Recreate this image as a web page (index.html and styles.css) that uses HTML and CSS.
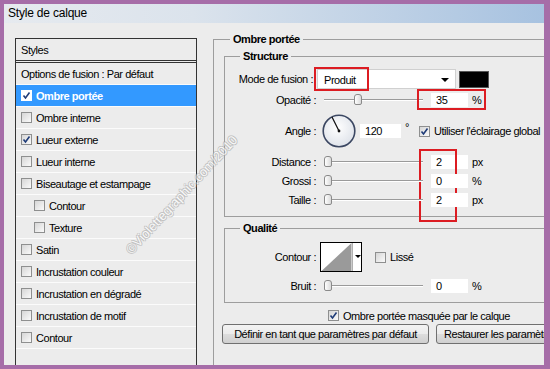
FILE: index.html
```html
<!DOCTYPE html>
<html>
<head>
<meta charset="utf-8">
<title>Style de calque</title>
<link rel="stylesheet" href="styles.css">
</head>
<body>
<div class="win">
  <div class="titlebar">Style de calque</div>
  <div class="main">
    <div class="styles-list">
      <div class="list-head">Styles</div>
      <div class="item">Options de fusion : Par défaut</div>
      <div class="item sel"><span class="cb on"><svg viewBox="0 0 9 9"><polyline points="1.5,4.5 3.5,7 7.5,1.5"/></svg></span>Ombre portée</div>
      <div class="item"><span class="cb"></span>Ombre interne</div>
      <div class="item"><span class="cb on"><svg viewBox="0 0 9 9"><polyline points="1.5,4.5 3.5,7 7.5,1.5"/></svg></span>Lueur externe</div>
      <div class="item"><span class="cb"></span>Lueur interne</div>
      <div class="item"><span class="cb"></span>Biseautage et estampage</div>
      <div class="item sub"><span class="cb"></span>Contour</div>
      <div class="item sub"><span class="cb"></span>Texture</div>
      <div class="item"><span class="cb"></span>Satin</div>
      <div class="item"><span class="cb"></span>Incrustation couleur</div>
      <div class="item"><span class="cb"></span>Incrustation en dégradé</div>
      <div class="item"><span class="cb"></span>Incrustation de motif</div>
      <div class="item"><span class="cb"></span>Contour</div>
    </div>

    <div class="options">
      <fieldset class="grp grp-main">
        <legend>Ombre portée</legend>

        <fieldset class="grp grp-sub">
          <legend>Structure</legend>
          <div class="row row-mode">
            <span class="lbl">Mode de fusion :</span>
            <div class="select">Produit<span class="arrow"></span><span class="mark mark-mode"></span></div>
            <span class="swatch"></span>
          </div>
          <div class="row row-slide row-opac">
            <span class="lbl">Opacité :</span>
            <div class="slider"><span class="thumb" style="left:30px"></span></div>
            <div class="num">35<span class="mark mark-opac"></span></div>
            <span class="unit">%</span>
          </div>
          <div class="row row-angle">
            <span class="lbl">Angle :</span>
            <svg class="dial" viewBox="0 0 34 34">
              <defs>
                <radialGradient id="dg" cx="0.45" cy="0.4" r="0.6">
                  <stop offset="0" stop-color="#ffffff"/>
                  <stop offset="1" stop-color="#dfe3ea"/>
                </radialGradient>
              </defs>
              <circle cx="17" cy="17" r="15.8" fill="url(#dg)" stroke="#3b4762" stroke-width="1.6"/>
              <line x1="17" y1="17" x2="10" y2="3" stroke="#111" stroke-width="1.2"/>
              <circle cx="17" cy="17" r="1.4" fill="#111"/>
            </svg>
            <div class="num num-angle">120</div>
            <span class="deg">°</span>
            <span class="cb on"><svg viewBox="0 0 9 9"><polyline points="1.5,4.5 3.5,7 7.5,1.5"/></svg></span>
            <span class="cb-text">Utiliser l'éclairage global</span>
          </div>
          <div class="row row-slide row-dist">
            <span class="lbl">Distance :</span>
            <div class="slider"><span class="thumb" style="left:0px"></span></div>
            <div class="num">2<span class="mark mark-dist"></span></div>
            <span class="unit">px</span>
          </div>
          <div class="row row-slide row-gros">
            <span class="lbl">Grossi :</span>
            <div class="slider"><span class="thumb" style="left:0px"></span></div>
            <div class="num">0</div>
            <span class="unit">%</span>
          </div>
          <div class="row row-slide row-size">
            <span class="lbl">Taille :</span>
            <div class="slider"><span class="thumb" style="left:0px"></span></div>
            <div class="num">2</div>
            <span class="unit">px</span>
          </div>
        </fieldset>

        <fieldset class="grp grp-sub grp-qual">
          <legend>Qualité</legend>
          <div class="row row-contour">
            <span class="lbl">Contour :</span>
            <div class="contour">
              <svg class="curve" viewBox="0 0 30 28"><polygon points="0,28 30,0 30,28" fill="#9a9a9a"/></svg>
              <span class="drop"></span>
            </div>
            <span class="cb cb-liss"></span>
            <span class="cb-text">Lissé</span>
          </div>
          <div class="row row-slide row-bruit">
            <span class="lbl">Bruit :</span>
            <div class="slider"><span class="thumb" style="left:0px"></span></div>
            <div class="num">0</div>
            <span class="unit">%</span>
          </div>
        </fieldset>

        <div class="row row-mask">
          <span class="cb on"><svg viewBox="0 0 9 9"><polyline points="1.5,4.5 3.5,7 7.5,1.5"/></svg></span>
          <span class="cb-text">Ombre portée masquée par le calque</span>
        </div>
        <div class="btns">
          <button class="btn btn-def">Définir en tant que paramètres par défaut</button>
          <button class="btn btn-rest">Restaurer les paramètres par défaut</button>
        </div>
      </fieldset>
    </div>
  </div>
  <div class="watermark">©Violettegraphic.com/2010</div>
</div>
</body>
</html>
```

FILE: styles.css
```css
*{margin:0; padding:0; box-sizing:border-box;}
html,body{width:550px; height:369px; overflow:hidden; background:#a66da8;}
body{
	font-family:"Liberation Sans", Arial, sans-serif;
	font-size:11px;
	letter-spacing:-0.45px;
	line-height:14px;
	color:#000;
}
.win{
	position:relative;
	width:550px;
	height:369px;
	border:4px solid #a66da8;
	border-right-width:6px;
	background:#ececec;
	overflow:hidden;
}
.titlebar{
	height:19px;
	line-height:19px;
	padding-left:4px;
	font-size:12px;
	letter-spacing:-0.2px;
	background:linear-gradient(to right, #e6eaef 0%, #dbe3ec 35%, #a7c2e0 100%);
}
.main{
	display:flex;
	align-items:flex-start;
	padding-top:15px;
}

/* ---------- left list ---------- */
.styles-list{
	flex:none;
	width:182px;
	height:340px;
	margin-left:11px;
	border:1px solid #333;
	background:#ececec;
}
.list-head{
	height:24px;
	line-height:22px;
	padding-left:5px;
	border-bottom:3px double #333;
}
.item{
	display:flex;
	align-items:center;
	height:22px;
	padding-left:5px;
	border-bottom:1px solid #fbfbfb;
}
.item .cb{margin-right:4px;}
.item.sub{padding-left:18px;}
.item.sel{
	background:#3399ff;
	color:#fff;
	font-weight:bold;
}
.item.sel .cb{background:#fff; border-color:#fff;}

/* checkbox */
.cb{
	flex:none;
	display:inline-flex;
	width:11px;
	height:11px;
	border:1px solid #8e8f8f;
	background:linear-gradient(135deg, #d6d6d6, #fafafa);
}
.cb svg{width:9px; height:9px;}
.cb polyline{fill:none; stroke:#1f3c78; stroke-width:1.6;}

/* ---------- right panel ---------- */
.options{
	flex:none;
	width:380px;
	margin-left:16px;
	margin-top:-5px;
}
.grp{
	border:1px solid #9d9d9d;
	min-width:0;
}
.grp legend{
	font-weight:bold;
	line-height:13px;
	padding:0 3px;
}
.grp-main{
	height:360px;
	padding:0 0 0 10px;
}
.grp-main > legend{margin-left:6px;}
.grp-sub{
	margin-top:4px;
	padding:6px 0 9px 0;
}
.grp-sub > legend{margin-left:15px;}
.grp-qual{margin-top:5px; padding-top:7px;}

.row{
	display:flex;
	align-items:center;
}
.lbl{
	flex:none;
	width:91px;
	text-align:right;
}
.row-mode .lbl{padding-right:3px;}
.row-mode{height:20px;}
.select{
	position:relative;
	width:139px;
	height:20px;
	line-height:20px;
	margin-left:1px;
	padding-left:6px;
	background:#fff;
	border:1px solid #d0d0d0;
}
.arrow{
	position:absolute;
	right:6px;
	top:8px;
	border-left:4px solid transparent;
	border-right:4px solid transparent;
	border-top:4px solid #000;
}
.swatch{
	width:30px;
	height:17px;
	margin-left:3px;
	background:#000;
	border:1px solid #555;
}
.row-slide{height:14px; margin-top:5px;}
.row-opac{margin-top:4px;}
.row-dist{margin-top:7px;}
.slider{
	position:relative;
	width:99px;
	height:14px;
	margin-left:8px;
}
.slider:before{
	content:"";
	position:absolute;
	left:0;
	right:0;
	top:6px;
	border-top:1px solid #9a9a9a;
	border-bottom:1px solid #fff;
}
.thumb{
	position:absolute;
	top:1px;
	width:8px;
	height:11px;
	border:1px solid #8a8a8a;
	border-radius:3px 3px 2px 2px;
	background:linear-gradient(to right, #ffffff, #dadada);
}
.num{
	position:relative;
	width:37px;
	height:14px;
	line-height:14px;
	margin-left:8px;
	padding-left:5px;
	background:#fff;
}
.unit{margin-left:4px;}
.row-angle{height:34px; margin-top:7px;}
.dial{width:34px; height:34px; margin-left:6px;}
.num-angle{width:41px; margin-left:4px;}
.deg{margin-left:4px; align-self:flex-start; margin-top:6px;}
.row-angle .cb{margin-left:10px;}
.cb-text{margin-left:4px;}

/* red marks */
.mark{
	position:absolute;
	border:2px solid #dc1c22;
}
.mark-mode{left:-4px; top:-3px; width:55px; height:24px;}
.mark-opac{left:-14px; top:-4px; width:69px; height:21px;}
.mark-dist{left:-12px; top:-6px; width:38px; height:73px;}

/* qualite */
.row-contour{height:30px;}
.contour{
	display:flex;
	width:42px;
	height:30px;
	margin-left:4px;
	border:1px solid #000;
	background:#fff;
}
.curve{width:31px; height:28px; display:block;}
.drop{
	position:relative;
	flex:1;
	border-left:1px solid #b0b0b0;
}
.drop:after{
	content:"";
	position:absolute;
	left:2px;
	top:12px;
	border-left:3px solid transparent;
	border-right:3px solid transparent;
	border-top:3px solid #000;
}
.cb-liss{margin-left:13px;}
.row-bruit{margin-top:7px;}

.row-mask{height:13px; margin-top:6px; padding-left:104px;}
.btns{
	display:flex;
	gap:7px;
	margin-top:2px;
	margin-left:-2px;
}
.btn{
	flex:none;
	height:20px;
	font-family:inherit;
	font-size:11px;
	letter-spacing:-0.45px;
	color:#000;
	border:1px solid #707070;
	border-radius:3px;
	background:linear-gradient(#f3f3f3 0%, #ebebeb 50%, #dddddd 51%, #d0d0d0 100%);
}
.btn-def{width:207px;}
.btn-rest{width:190px; text-align:left; padding-left:7px;}

.watermark{
	position:absolute;
	left:100px;
	top:184px;
	font-size:13px;
	letter-spacing:0;
	color:#fff;
	opacity:0.65;
	text-shadow:1px 0 #a8a8a8, -1px 0 #a8a8a8, 0 1px #a8a8a8, 0 -1px #a8a8a8;
	transform:rotate(-47deg);
}
```
